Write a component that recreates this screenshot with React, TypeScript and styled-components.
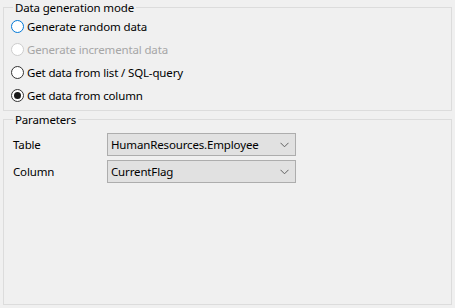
import React from "react";
import styled, { createGlobalStyle } from "styled-components";

const GlobalStyle = createGlobalStyle`
  html, body {
    margin: 0;
    padding: 0;
    background: #f0f0f0;
  }
  body {
    font-family: "Noto Sans", "Liberation Sans", sans-serif;
    font-size: 11.5px;
    letter-spacing: -0.15px;
    color: #000;
  }
`;

const Page = styled.div`
  width: 455px;
  height: 308px;
  box-sizing: border-box;
  padding: 0 3px 3px 3px;
  display: flex;
  flex-direction: column;
  gap: 1px;
`;

const Group = styled.fieldset<{ $grow?: boolean }>`
  margin: 0;
  border: 1px solid #dcdcdc;
  padding: 0 0 ${(p) => (p.$grow ? "1px" : "3px")} 0;
  min-width: 0;
  flex: ${(p) => (p.$grow ? "1 1 auto" : "0 0 auto")};
`;

const Legend = styled.legend`
  margin-left: 9px;
  padding: 0 2px;
  line-height: 15px;
`;

const RadioList = styled.div`
  display: flex;
  flex-direction: column;
  padding: 0 0 0 7px;
`;

const RadioRow = styled.label<{ $disabled?: boolean }>`
  display: flex;
  align-items: center;
  gap: 3px;
  height: 23px;
  color: ${(p) => (p.$disabled ? "#a6a6a6" : "#000")};
`;

const Params = styled.div`
  display: grid;
  grid-template-columns: 94px 189px;
  row-gap: 4px;
  padding: 6px 0 0 9px;
  align-items: center;
`;

const Label = styled.span`
  line-height: 23px;
`;

const Combo = styled.div`
  height: 23px;
  box-sizing: border-box;
  border: 1px solid #adadad;
  background: #e1e1e1;
  display: flex;
  align-items: center;
  justify-content: space-between;
  padding: 0 6px 0 3px;
`;

type RadioState = "normal" | "focused" | "disabled" | "checked";

const RadioIcon: React.FC<{ state: RadioState }> = ({ state }) => {
  const stroke =
    state === "focused" ? "#0078d7" : state === "disabled" ? "#cccccc" : "#333333";
  return (
    <svg width="13" height="13" viewBox="0 0 13 13">
      <circle cx="6.5" cy="6.5" r="6" fill="#fff" stroke={stroke} strokeWidth="1" />
      {state === "checked" && <circle cx="6.5" cy="6.5" r="3.5" fill="#1a1a1a" />}
    </svg>
  );
};

const Chevron = () => (
  <svg width="9" height="6" viewBox="0 0 9 6">
    <path d="M0.5 0.8 L4.5 4.8 L8.5 0.8" fill="none" stroke="#606060" strokeWidth="1" />
  </svg>
);

const modes: { text: string; state: RadioState }[] = [
  { text: "Generate random data", state: "focused" },
  { text: "Generate incremental data", state: "disabled" },
  { text: "Get data from list / SQL-query", state: "normal" },
  { text: "Get data from column", state: "checked" },
];

const params = [
  { label: "Table", value: "HumanResources.Employee" },
  { label: "Column", value: "CurrentFlag" },
];

const App: React.FC = () => {
  return (
    <>
      <GlobalStyle />
      <Page>
        <Group>
          <Legend>Data generation mode</Legend>
          <RadioList>
            {modes.map((m) => (
              <RadioRow key={m.text} $disabled={m.state === "disabled"}>
                <RadioIcon state={m.state} />
                <span>{m.text}</span>
              </RadioRow>
            ))}
          </RadioList>
        </Group>
        <Group $grow>
          <Legend>Parameters</Legend>
          <Params>
            {params.map((p) => (
              <React.Fragment key={p.label}>
                <Label>{p.label}</Label>
                <Combo>
                  <span>{p.value}</span>
                  <Chevron />
                </Combo>
              </React.Fragment>
            ))}
          </Params>
        </Group>
      </Page>
    </>
  );
};

export default App;
